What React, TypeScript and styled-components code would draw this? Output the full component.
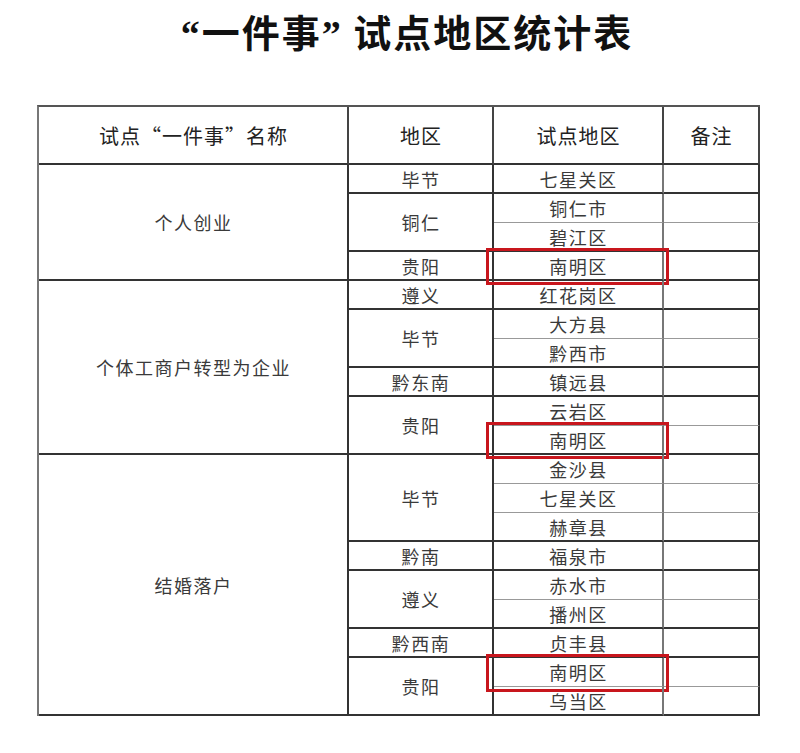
import styled, { createGlobalStyle } from "styled-components";

const GlobalStyle = createGlobalStyle`
	html, body {
		margin: 0;
		padding: 0;
		background: #fff;
	}
	body {
		font-family: "Noto Sans CJK SC", "Noto Sans", sans-serif;
	}
`;

type Region = { name: string; areas: string[] };
type Group = { name: string; regions: Region[] };

const MARKED = "南明区";

const groups: Group[] = [
	{
		name: "个人创业",
		regions: [
			{ name: "毕节", areas: ["七星关区"] },
			{ name: "铜仁", areas: ["铜仁市", "碧江区"] },
			{ name: "贵阳", areas: ["南明区"] },
		],
	},
	{
		name: "个体工商户转型为企业",
		regions: [
			{ name: "遵义", areas: ["红花岗区"] },
			{ name: "毕节", areas: ["大方县", "黔西市"] },
			{ name: "黔东南", areas: ["镇远县"] },
			{ name: "贵阳", areas: ["云岩区", "南明区"] },
		],
	},
	{
		name: "结婚落户",
		regions: [
			{ name: "毕节", areas: ["金沙县", "七星关区", "赫章县"] },
			{ name: "黔南", areas: ["福泉市"] },
			{ name: "遵义", areas: ["赤水市", "播州区"] },
			{ name: "黔西南", areas: ["贞丰县"] },
			{ name: "贵阳", areas: ["南明区", "乌当区"] },
		],
	},
];

const Page = styled.div`
	width: 800px;
	height: 753px;
	padding-top: 12px;
	box-sizing: border-box;
`;

const Title = styled.h1`
	margin: 0 0 52px;
	text-align: center;
	font-size: 38px;
	line-height: 38px;
	font-weight: 700;
	color: #111;
	letter-spacing: 2px;
	padding-left: 14px;
`;

const Quote = styled.span`
	font-family: "Liberation Serif", serif;
	font-weight: 700;
`;

const Table = styled.table`
	margin-left: 37px;
	width: 721px;
	table-layout: fixed;
	border-collapse: separate;
	border-spacing: 0;
	border-top: 2px solid #555;
	border-left: 2px solid #777;
`;

const HeadCell = styled.th`
	height: 56px;
	padding: 0 0 0 1px;
	font-size: 20px;
	font-weight: 400;
	color: #222;
	letter-spacing: 1px;
	text-align: center;
	border-right: 2px solid #444;
	border-bottom: 2px solid #333;
`;

const Cell = styled.td<{ $light?: boolean; $lightRight?: boolean }>`
	height: 27px;
	padding: 0 0 0 1px;
	font-size: 18px;
	line-height: 20px;
	color: #3a3a3a;
	letter-spacing: 1.5px;
	text-align: center;
	vertical-align: middle;
	border-right: 2px solid ${(p) => (p.$lightRight ? "#777" : "#333")};
	border-bottom: ${(p) => (p.$light ? "1px solid #999" : "2px solid #333")};
	${(p) => (p.$light ? "padding-bottom: 1px;" : "")}
`;

const AreaCell = styled(Cell)<{ $marked?: boolean }>`
	position: relative;
	&::after {
		content: "";
		display: ${(p) => (p.$marked ? "block" : "none")};
		position: absolute;
		top: -4px;
		bottom: -6px;
		left: -8px;
		right: -7px;
		border: 3px solid #c8161d;
		pointer-events: none;
	}
`;

const App = (): JSX.Element => {
	return (
		<Page>
			<GlobalStyle />
			<Title>
				<Quote>“</Quote>一件事<Quote>”</Quote> 试点地区统计表
			</Title>
			<Table>
				<colgroup>
					<col style={{ width: 310 }} />
					<col style={{ width: 145 }} />
					<col style={{ width: 170 }} />
					<col style={{ width: 96 }} />
				</colgroup>
				<thead>
					<tr>
						<HeadCell>试点“一件事”名称</HeadCell>
						<HeadCell>地区</HeadCell>
						<HeadCell>试点地区</HeadCell>
						<HeadCell>备注</HeadCell>
					</tr>
				</thead>
				<tbody>
					{groups.map((group) => {
						const rowCount = group.regions.reduce((n, r) => n + r.areas.length, 0);
						return group.regions.flatMap((region, ri) =>
							region.areas.map((area, ai) => {
								const lastInRegion = ai === region.areas.length - 1;
								return (
									<tr key={`${group.name}-${region.name}-${area}`}>
										{ri === 0 && ai === 0 && (
											<Cell rowSpan={rowCount}>{group.name}</Cell>
										)}
										{ai === 0 && (
											<Cell rowSpan={region.areas.length}>{region.name}</Cell>
										)}
										<AreaCell $light={!lastInRegion} $lightRight $marked={area === MARKED}>
											{area}
										</AreaCell>
										<Cell $light={!lastInRegion} />
									</tr>
								);
							})
						);
					})}
				</tbody>
			</Table>
		</Page>
	);
};

export default App;
